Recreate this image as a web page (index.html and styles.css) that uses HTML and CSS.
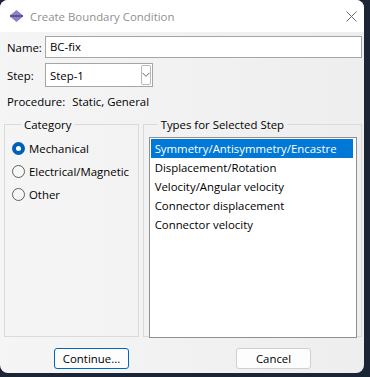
FILE: index.html
```html
<!DOCTYPE html>
<html lang="en">
<head>
  <meta charset="UTF-8">
  <meta name="viewport" content="width=device-width, initial-scale=1.0">
  <title>Create Boundary Condition</title>
  <link rel="stylesheet" href="styles.css">
</head>
<body>
  <div class="dlg">
    <!-- title bar -->
    <div class="titlebar">
      <svg class="ico" width="13" height="12" viewBox="0 0 13 12">
        <path d="M6.5 0 L12.5 5 L0.5 5 Z" fill="#8b82c4"/>
        <path d="M0.5 7 L12.5 7 L6.5 12 Z" fill="#8b82c4"/>
        <rect x="0" y="5" width="13" height="2" fill="#5d5199"/>
      </svg>
      <span class="ttl">Create Boundary Condition</span>
      <svg class="close" width="11" height="11" viewBox="0 0 11 11">
        <path d="M0.5 0.5 L10.5 10.5 M10.5 0.5 L0.5 10.5" stroke="#6b6b6b" stroke-width="1"/>
      </svg>
    </div>

    <div class="body">
      <div class="row name">
        <label>Name:</label>
        <div class="field">BC-fix</div>
      </div>
      <div class="row step">
        <label>Step:</label>
        <div class="combo">
          <span>Step-1</span>
          <span class="drop">
            <svg width="9" height="6" viewBox="0 0 9 6"><path d="M0.5 0.5 L4.5 4.5 L8.5 0.5" fill="none" stroke="#555" stroke-width="1"/></svg>
          </span>
        </div>
      </div>
      <div class="proc">Procedure:<span>Static, General</span></div>

      <div class="groups">
        <fieldset class="grp cat">
          <legend>Category</legend>
          <div class="radio on"><i></i>Mechanical</div>
          <div class="radio"><i></i>Electrical/Magnetic</div>
          <div class="radio"><i></i>Other</div>
        </fieldset>
        <fieldset class="grp types">
          <legend>Types for Selected Step</legend>
          <ul class="list">
            <li class="sel">Symmetry/Antisymmetry/Encastre</li>
            <li>Displacement/Rotation</li>
            <li>Velocity/Angular velocity</li>
            <li>Connector displacement</li>
            <li>Connector velocity</li>
          </ul>
        </fieldset>
      </div>

      <div class="btns">
        <button class="btn focus">Continue...</button>
        <button class="btn">Cancel</button>
      </div>
    </div>
  </div>
</body>
</html>
```

FILE: styles.css
```css
* {
  margin: 0;
  padding: 0;
  box-sizing: border-box;
}
ul, li {
  list-style: none;
}
body {
  background: #1c2535;
  font-family: "Open Sans", "Noto Sans", sans-serif;
  font-size: 11.4px;
  color: #000;
}

/* dialog */
.dlg {
  width: 364px;
  height: 373px;
  border-radius: 8px;
  overflow: hidden;
  background: linear-gradient(to right, #f5f5f5, #eeeeee);
}
.titlebar {
  height: 32px;
  background: #fff;
  display: flex;
  align-items: center;
  padding: 0 7px 0 10px;
}
.ico {
  margin-right: 7px;
}
.ttl {
  flex: 1;
  color: #8f8f8f;
}

.body {
  padding: 4px 2px 0 4px;
}
.row {
  display: flex;
  align-items: center;
}
.row label {
  width: 41px;
  padding-left: 3px;
}
.name {
  height: 22px;
}
.field {
  flex: 1;
  height: 22px;
  border: 1px solid #a5a5a5;
  background: #fff;
  padding-left: 4px;
  line-height: 20px;
}
.step {
  margin-top: 5px;
  height: 24px;
}
.combo {
  width: 108px;
  height: 24px;
  border: 1px solid #a5a5a5;
  background: #fff;
  display: flex;
  align-items: center;
  justify-content: space-between;
  padding: 0 1px 0 4px;
}
.drop {
  width: 10px;
  height: 20px;
  border: 1px solid #b8b8b8;
  border-radius: 2px;
  display: flex;
  align-items: center;
  justify-content: center;
}
.proc {
  margin-top: 5px;
  padding-left: 3px;
  height: 19px;
  line-height: 19px;
}
.proc span {
  margin-left: 7px;
}

/* group boxes */
.groups {
  margin-top: 14px;
  display: flex;
  gap: 4px;
}
.grp {
  border: 1px solid #dadada;
  height: 220px;
  margin-top: -8px;
}
.grp legend {
  margin-left: 9px;
  padding: 0 3px;
  line-height: 15px;
}
.cat {
  width: 135px;
  padding: 5px 0 0 7px;
}
.types {
  width: 220px;
  padding: 5px 4px 3px 5px;
}
.radio {
  display: flex;
  align-items: center;
  height: 23px;
}
.radio i {
  width: 13px;
  height: 13px;
  border: 1px solid #5f5f5f;
  border-radius: 50%;
  background: #f7f7f7;
  margin-right: 4px;
}
.radio.on i {
  border: 4px solid #005fb8;
  background: #fff;
}

/* list */
.list {
  height: 201px;
  border: 1px solid #8f8f8f;
  background: #fff;
  padding: 1px 3px 0 1px;
}
.list li {
  height: 19px;
  line-height: 19px;
  padding-left: 4px;
  white-space: nowrap;
}
.list li.sel {
  background: #0078d7;
  color: #fff;
}

/* buttons */
.btns {
  margin-top: 11px;
  display: flex;
  padding-left: 50px;
  gap: 107px;
}
.btn {
  width: 75px;
  height: 21px;
  border: 1px solid #d0d0d0;
  border-radius: 3px;
  background: #fdfdfd;
  font: inherit;
  color: #000;
}
.btn.focus {
  border-color: #0067c0;
}
```
